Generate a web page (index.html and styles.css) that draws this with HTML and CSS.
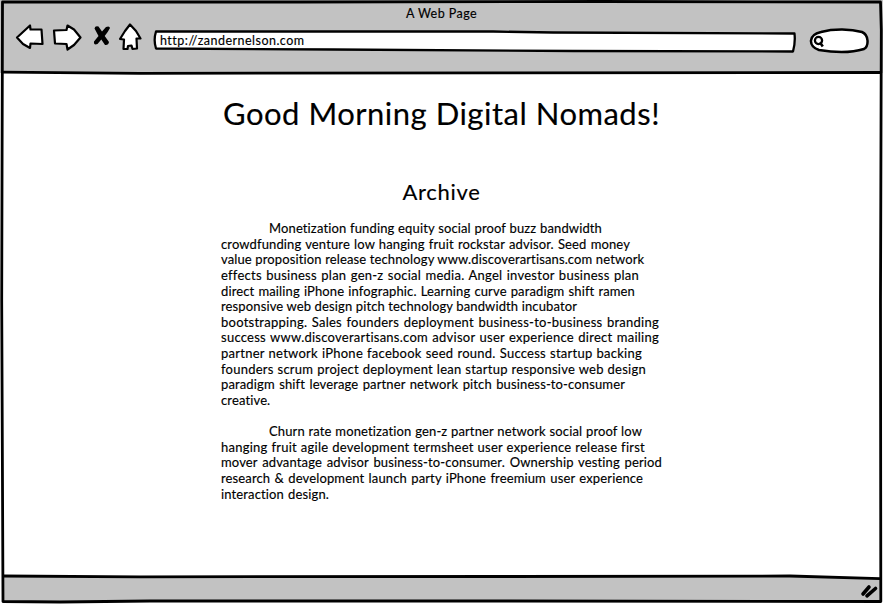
FILE: index.html
```
<!DOCTYPE html>
<html lang="en">
<head>
<meta charset="utf-8">
<title>A Web Page</title>
<link rel="stylesheet" href="styles.css">
</head>
<body>
<div class="browser">
  <header class="chrome">
    <div class="title">A Web Page</div>
    <div class="toolbar">
      <svg class="nav" width="132" height="36" viewBox="0 0 132 36">
        <g fill="#fff" stroke="#000" stroke-width="2.200" stroke-linejoin="round">
          <path d="M4 17.500 L17 5.500 L17.500 9.500 L28.500 9.500 L29.500 24 L17.500 23.500 L17 28 L10 24Z"/>
          <path d="M41 10.500 L53.500 10 L54.500 5.500 L61 9.500 L67.500 17.500 L61 25 L54.500 29.500 L53.500 24 L42 23.500 Z"/>
          <path d="M107 19 L112 11 L117 4.500 L123 11 L127.500 18.500 L123.500 18.500 L124 28.500 L119.500 29 L118.500 25.500 L115 26 L114.500 29 L110.500 29 L111 19.500 Z"/>
        </g>
        <path d="M81.500 8.500 Q82 5.500 85.500 6.500 L89 11.500 L93 7 Q96.500 5.500 97 8 Q95 12 91.700 16 L96 22 Q95.500 25.500 92 25 L88.300 19.500 L84.500 24 Q80.500 25.500 81 21.500 L85.500 16 Z" fill="#000"/>
      </svg>
      <div class="address">
        <svg class="outline" width="644" height="24" viewBox="0 0 644 24"><path d="M3 2.500 L340 2.500 L400 3.500 L641.500 4.500 Q642.500 14 640 22.500 L420 22 L180 20.500 L3 19.500 Q.3 11 3 2.500Z" fill="#fff" stroke="#000" stroke-width="2.300" stroke-linejoin="round"/></svg>
        <span class="url">http://zandernelson.com</span>
      </div>
      <svg class="search" width="64" height="28" viewBox="0 0 64 28">
        <path d="M10 23 C-1 19 -1 8 12 5 C25 1.500 42 2 53 5 C60 8 60 19 55 22 C42 26 25 25.500 10 23Z" fill="#fff" stroke="#000" stroke-width="2.500"/>
        <circle cx="9.500" cy="13.500" r="3.600" fill="none" stroke="#000" stroke-width="2.300"/>
        <path d="M11 15.500 L13.800 19.500" stroke="#000" stroke-width="2.600"/>
      </svg>
    </div>
  </header>
  <main class="page">
    <h1><span>Good Morning Digital Nomads!</span></h1>
    <h2><span>Archive</span></h2>
    <p>
      <span class="line indent w333">Monetization funding equity social proof buzz bandwidth</span>
      <span class="line w409">crowdfunding venture low hanging fruit rockstar advisor. Seed money</span>
      <span class="line w422">value proposition release technology www.discoverartisans.com network</span>
      <span class="line loose w418">effects business plan gen-z social media. Angel investor business plan</span>
      <span class="line w414">direct mailing iPhone infographic. Learning curve paradigm shift ramen</span>
      <span class="line w356">responsive web design pitch technology bandwidth incubator</span>
      <span class="line loose w438">bootstrapping. Sales founders deployment business-to-business branding</span>
      <span class="line loose w438">success www.discoverartisans.com advisor user experience direct mailing</span>
      <span class="line loose w421">partner network iPhone facebook seed round. Success startup backing</span>
      <span class="line loose w425">founders scrum project deployment lean startup responsive web design</span>
      <span class="line w404">paradigm shift leverage partner network pitch business-to-consumer</span>
      <span class="line w49">creative.</span>
    </p>
    <p>
      <span class="line indent w373">Churn rate monetization gen-z partner network social proof low</span>
      <span class="line loose w424">hanging fruit agile development termsheet user experience release first</span>
      <span class="line w441">mover advantage advisor business-to-consumer. Ownership vesting period</span>
      <span class="line w422">research &amp; development launch party iPhone freemium user experience</span>
      <span class="line w108">interaction design.</span>
    </p>
  </main>
  <footer class="status"></footer>
  <svg class="frame" width="883" height="604" viewBox="0 0 883 604">
    <path d="M3 576.200 L200 576.800 L500 576.500 L800 576 L880 579 V601.500 L500 601.500 L3 601.500Z" fill="#c2c2c2"/>
    <g fill="none" stroke="#000" stroke-width="2.800" stroke-linejoin="round">
      <path d="M2.500 2 L300 2 L600 1.500 L880.500 2 L881.300 30 L880.500 300 L880.800 601.500 L500 601 L150 601 L60 602 L3 601.500 L1.700 300Z"/>
      <path d="M3 72.200 L140 73.300 L500 72.800 L880 72.500"/>
      <path d="M3 576 L140 576.800 L500 576.500 L790 576 L880 578.700"/>
    </g>
    <path d="M863 594 L869 587 M867 595.800 L875.500 588.500" stroke="#000" stroke-width="3.600" stroke-linecap="round"/>
  </svg>
</div>
</body>
</html>
```
FILE: styles.css
```
* { box-sizing: border-box; }
body { margin: 0; background: #fff; color: #000; font-family: Lato, "Liberation Sans", sans-serif; overflow: hidden; -webkit-text-stroke: .15px #000; }
.browser { position: relative; width: 883px; height: 604px; display: flex; flex-direction: column; }
.chrome { height: 73px; background: #c2c2c2; flex: none; }
.title { height: 20px; padding-top: 6px; text-align: center; font-size: 12.500px; line-height: 15px; letter-spacing: .45px; }
.toolbar { display: flex; padding-left: 13px; }
.nav { flex: none; }
.address { position: relative; width: 644px; height: 24px; margin: 9px 0 0 8px; flex: none; }
.outline { position: absolute; left: 0; top: 0; }
.url { position: relative; display: block; padding: 4px 0 0 7px; font-size: 12.500px; line-height: 15px; letter-spacing: .48px; }
.search { margin: 7px 0 0 12px; flex: none; }
.page { flex: 1; width: 441px; margin: 0 auto; }
h1, h2, p { margin: 0; font-weight: 400; }
h1 { padding-top: 20px; font-size: 31px; line-height: 40px; letter-spacing: .5px; text-align: center; white-space: nowrap; }
h2 { padding-top: 44px; font-size: 22px; line-height: 30px; letter-spacing: .7px; text-align: center; }
p { padding-top: 14px; font-size: 13px; line-height: 15.630px; letter-spacing: .13px; }
p + p { padding-top: 15.600px; }
.line { display: block; white-space: nowrap; text-align: justify; text-align-last: justify; }
.loose { letter-spacing: .25px; }
.indent { margin-left: 48px; }
.w49 { width: 49px; } .w108 { width: 108px; } .w333 { width: 333px; }
.w356 { width: 356px; } .w373 { width: 373px; } .w404 { width: 404px; }
.w409 { width: 409px; } .w414 { width: 414px; } .w418 { width: 418px; }
.w421 { width: 421px; } .w422 { width: 422px; } .w424 { width: 424px; }
.w425 { width: 425px; } .w438 { width: 438px; } .w441 { width: 441px; }
.status { height: 27px; flex: none; }
.frame { position: absolute; left: 0; top: 0; pointer-events: none; }
```
